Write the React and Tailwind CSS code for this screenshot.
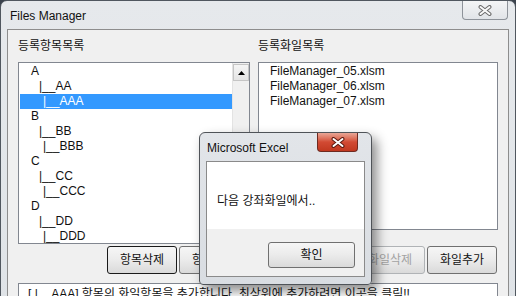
import React from 'react';

const FONT = "font-['Liberation_Sans','Noto_Sans_CJK_KR',sans-serif]";

const treeItems = [
  { t: 'A', pl: 'pl-[11px]' },
  { t: '|__AA', pl: 'pl-[19px]' },
  { t: '|__AAA', pl: 'pl-[23px]', sel: true },
  { t: 'B', pl: 'pl-[11px]' },
  { t: '|__BB', pl: 'pl-[19px]' },
  { t: '|__BBB', pl: 'pl-[23px]' },
  { t: 'C', pl: 'pl-[11px]' },
  { t: '|__CC', pl: 'pl-[19px]' },
  { t: '|__CCC', pl: 'pl-[23px]' },
  { t: 'D', pl: 'pl-[11px]' },
  { t: '|__DD', pl: 'pl-[19px]' },
  { t: '|__DDD', pl: 'pl-[23px]' },
];

const files = ['FileManager_05.xlsm', 'FileManager_06.xlsm', 'FileManager_07.xlsm'];

function Button({ children, focused, disabled, className = '' }) {
  return (
    <button
      className={`h-[28px] w-[70px] rounded-[3px] border bg-linear-to-b from-[#f6f6f6] via-[#ebebeb] to-[#dadada] text-[12px] leading-none ${
        focused ? 'border-[#1a1a1a]' : disabled ? 'border-[#b0b3b6]' : 'border-[#707070]'
      } ${disabled ? 'text-[#a3a3a3]' : 'text-[#111]'} ${className}`}
    >
      {children}
    </button>
  );
}

function CloseX({ color = '#6b6b6b', fill = '#fafafa' }) {
  return (
    <svg width="14" height="11" viewBox="0 0 14 11">
      <path d="M2.5 2 L11.5 9 M11.5 2 L2.5 9" stroke={color} strokeWidth="4" strokeLinecap="round" />
      <path d="M2.5 2 L11.5 9 M11.5 2 L2.5 9" stroke={fill} strokeWidth="2" strokeLinecap="round" />
    </svg>
  );
}

export default function App() {
  return (
    <div className={`relative h-[296px] w-[516px] overflow-hidden bg-[#3b434d] ${FONT}`}>
      {/* main window */}
      <div className="h-[320px] rounded-t-[7px] border border-[#50575f] bg-linear-to-b from-[#e6e9ec] to-[#dfe3e7]">
        <div className="flex h-[28px] items-start">
          <span className="pl-[9px] pt-[6px] text-[12px] text-[#111]">Files Manager</span>
          <div className="ml-auto mr-[7px] flex h-[19px] w-[46px] items-center justify-center rounded-b-[4px] border border-t-0 border-[#8e939a] bg-linear-to-b from-[#f4f5f6] to-[#e1e4e8]">
            <CloseX />
          </div>
        </div>

        <div className="mx-[6px] border-x border-t border-[#8d8d8d] bg-[#f0f0f0] px-[10px] pt-[8px]">
          <div className="flex gap-[8px]">
            {/* left column */}
            <div className="flex w-[232px] flex-col">
              <div className="mb-[8px] h-[16px] text-[12px] leading-[16px] text-[#111]">등록항목목록</div>
              <div className="flex h-[182px] border border-[#828790] bg-white">
                <div className="flex-1 pt-[1px] pl-[1px]">
                  {treeItems.map((it) => (
                    <div
                      key={it.t}
                      className={`h-[15px] text-[12px] leading-[15px] ${it.pl} ${
                        it.sel ? 'bg-[#3399ff] text-white' : 'text-[#111]'
                      }`}
                    >
                      {it.t}
                    </div>
                  ))}
                </div>
                <div className="w-[17px] border-l border-[#e3e3e3] bg-[#f0f0f0] pt-[1px]">
                  <div className="flex h-[17px] items-center justify-center border border-[#c5c5c5] bg-linear-to-b from-[#f5f5f5] to-[#e4e4e4]">
                    <svg width="7" height="4" viewBox="0 0 7 4">
                      <path d="M0 4 L3.5 0 L7 4 Z" fill="#000" />
                    </svg>
                  </div>
                </div>
              </div>
              <div className="mt-[2px] flex justify-end gap-[2px] pr-[1px]">
                <Button focused>항목삭제</Button>
                <Button>항목추가</Button>
              </div>
            </div>

            {/* right column */}
            <div className="flex w-[240px] flex-col">
              <div className="mb-[8px] h-[16px] text-[12px] leading-[16px] text-[#111]">등록화일목록</div>
              <div className="h-[168px] border border-[#828790] bg-white pt-[1px]">
                {files.map((f) => (
                  <div key={f} className="h-[15px] pl-[11px] text-[12px] leading-[15px] text-[#111]">
                    {f}
                  </div>
                ))}
              </div>
              <div className="mt-[16px] flex justify-end gap-[2px] pr-[1px]">
                <Button disabled>화일삭제</Button>
                <Button>화일추가</Button>
              </div>
            </div>
          </div>

          <div className="mt-[9px] h-[26px] border border-[#828790] bg-white pl-[9px] pt-[3px] text-[12px] leading-[15px] text-[#111]">
            [ |__AAA] 항목의 화일항목을 추가합니다. 최상위에 추가하려면 이곳을 클릭!!
          </div>
        </div>
      </div>

      {/* message box */}
      <div className="absolute left-[199px] top-[132px] flex h-[153px] w-[173px] flex-col rounded-t-[6px] rounded-b-[4px] border border-[#4f5358] bg-linear-to-b from-[#e2e5e9] to-[#d9dde2] shadow-[5px_6px_12px_rgba(0,0,0,0.45)]">
        <div className="flex h-[28px] items-start">
          <span className="pl-[7px] pt-[8px] text-[12px] leading-[14px] text-[#111]">Microsoft Excel</span>
          <div className="ml-auto mr-[13px] flex h-[19px] w-[41px] items-center justify-center rounded-b-[4px] border border-t-0 border-[#6e2a20] bg-linear-to-b from-[#e8a696] via-[#d24a33] to-[#c1381f]">
            <CloseX color="#5c1a10" fill="#ffffff" />
          </div>
        </div>
        <div className="mx-[6px] flex flex-1 flex-col border border-[#8a8a8a] mb-[7px]">
          <div className="h-[67px] bg-white pl-[10px] pt-[31px] text-[12px] leading-[16px] text-[#111]">
            다음 강좌화일에서..
          </div>
          <div className="flex flex-1 justify-end bg-[#f0f0f0] pr-[9px] pt-[13px]">
            <Button className="!h-[26px] !w-[87px]">확인</Button>
          </div>
        </div>
      </div>
    </div>
  );
}
